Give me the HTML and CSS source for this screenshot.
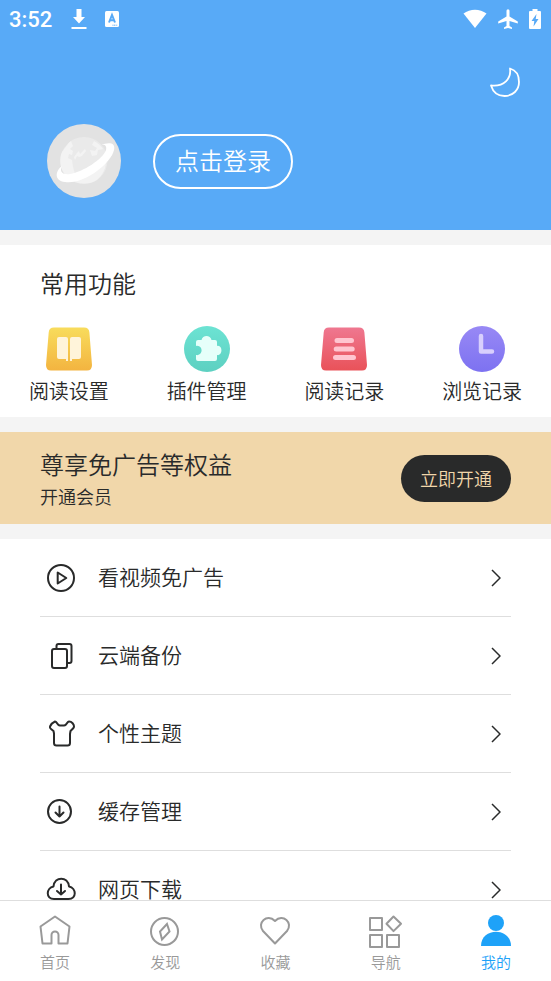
FILE: index.html
```html
<!DOCTYPE html>
<html lang="zh-CN">
<head>
<meta charset="utf-8">
<meta name="viewport" content="width=device-width, initial-scale=1">
<title>我的</title>
<link rel="stylesheet" href="styles.css">
</head>
<body>
<div class="content">
  <header class="profile">
    <div class="status">
      <span class="time">3:52</span>
      <svg class="s-download" width="16" height="22" viewBox="0 0 16 22" fill="#fff"><path d="M5.500 1h5v8H14L8 15.500 2 9h3.500zM.5 19h15v2H.5z"/></svg>
      <svg class="s-app" width="16" height="16" viewBox="0 0 16 16"><rect x="1" width="14" height="16" rx="1.500" fill="#fff"/><path d="M5 11.500 8 4l3 7.500M6 9.200h4" fill="none" stroke="#58aaf7" stroke-width="2"/><path d="M8.500 14.200h5" stroke="#58aaf7" stroke-dasharray="1 .6"/></svg>
      <span class="spacer"></span>
      <svg width="24" height="20" viewBox="0 0 24 20" fill="#fff"><path d="M.5 4.500C7-.6 17-.6 23.500 4.500L12 19z"/></svg>
      <svg width="20" height="20" viewBox="0 0 20 20" fill="#fff"><path d="M8.500 1.800a1.500 1.500 0 0 1 3 0v5.700l8.300 5v2l-8.300-2.600v5l2.500 1.600V20l-4-1-4 1v-1.500l2.500-1.600v-5L.2 14.500v-2l8.300-5z"/></svg>
      <svg width="12" height="20" viewBox="0 0 12 20"><path fill="#fff" d="M3.500 0h5v2H11q1 0 1 1v16q0 1-1 1H1q-1 0-1-1V3q0-1 1-1h2.500z"/><path fill="#58aaf7" d="M7.500 5 2.500 12h2.800L4.500 17.500 9.500 10H6.700z"/></svg>
    </div>
    <div class="tools">
      <button class="theme" aria-label="夜间模式"><svg width="32" height="32" viewBox="0 0 32 32" fill="none" stroke="#fff" stroke-width="1.800" stroke-linejoin="round"><path d="M21 2.500C22.500 12.500 15 21 2 19.500 4 26 9 30 15.500 30 24 30 30 24 30 16 30 9 26.500 4 21 2.500Z"/></svg></button>
    </div>
    <div class="account">
      <svg class="avatar" width="74" height="74" viewBox="0 0 74 74"><circle cx="37" cy="37" r="37" fill="#e2e2e2"/><circle cx="37" cy="36.500" r="23.500" fill="#eaeaea"/><path fill="#f3f3f3" d="M22 18.500 24 17l2 5-3 3 3 2-1 4-3-1-1 4 4 2 1 7 2 7-4 5C14 51 11 37 15 28zM27 33l3-4 2-2 1 3 5-5 1 2-4 5-3 1-2-1-2 4zM43 26l5 1 2-3-5-3 2-4q6 3 9 8l-5 1-1 5-5 1z"/><path fill="#f3f3f3" d="M59 39Q58 49 50 56q-10 6-22 2l6-4 13-8 4-5z"/><path fill="#fff" d="M54 21C61 18 69 18 67 26 64 40 36 61 18 58 7 57 8 47 15 42 12 48 16 51 23 50 36 48 56 35 59 26 60 22 58 20 54 21Z"/></svg>
      <button class="login">点击登录</button>
    </div>
  </header>

  <section class="card">
    <h2>常用功能</h2>
    <div class="features">
      <a href="#"><svg width="46" height="46" viewBox="0 0 46 46"><defs><linearGradient id="gy" x2="0" y2="1"><stop stop-color="#f8dc5c"/><stop offset="1" stop-color="#f3b440"/></linearGradient></defs><path fill="url(#gy)" d="M8 1.500h30q5 0 5.400 5L46 39q0 5.500-5 5.500H5q-5 0-5-5.500L2.700 6.500Q3 1.500 8 1.500z"/><path fill="#fff4da" d="M13 11h7q2 0 2 2v22h-2v-2h-7q-2 0-2-2V13q0-2 2-2zM26 11h7q2 0 2 2v18q0 2-2 2h-7v2h-2V13q0-2 2-2z"/></svg>阅读设置</a>
      <a href="#"><svg width="46" height="46" viewBox="0 0 46 46"><defs><linearGradient id="gg" x2="0" y2="1"><stop stop-color="#6ce3d3"/><stop offset="1" stop-color="#5dd0c1"/></linearGradient></defs><circle cx="23" cy="23" r="23" fill="url(#gg)"/><path fill="#e6fffa" d="M14 14H17.500C18.500 8.700 26.500 8.700 27.500 14H31Q33 14 33 16V20C39 18.500 39 30.500 33 29V33Q33 35 31 35H14Q12 35 12 33V29C19.500 30.500 19.500 18.500 12 20V16Q12 14 14 14Z"/></svg>插件管理</a>
      <a href="#"><svg width="46" height="46" viewBox="0 0 46 46"><defs><linearGradient id="gr" x2="0" y2="1"><stop stop-color="#ef7790"/><stop offset="1" stop-color="#e95259"/></linearGradient></defs><path fill="url(#gr)" d="M8 1.500h30q5 0 5.400 5L46 39q0 5.500-5 5.500H5q-5 0-5-5.500L2.700 6.500Q3 1.500 8 1.500z"/><path stroke="#ffc5d0" stroke-width="5" stroke-linecap="round" d="M16 14.500h14.500M15.200 23h16M14.500 31.500h18"/></svg>阅读记录</a>
      <a href="#"><svg width="46" height="46" viewBox="0 0 46 46"><defs><linearGradient id="gp" x2="0" y2="1"><stop stop-color="#9889f5"/><stop offset="1" stop-color="#7d72f1"/></linearGradient></defs><circle cx="23" cy="23" r="23" fill="url(#gp)"/><path fill="none" stroke="#d8cffd" stroke-width="4.500" stroke-linecap="round" stroke-linejoin="round" d="M22 10v15.500h11"/></svg>浏览记录</a>
    </div>
  </section>

  <section class="vip">
    <div>
      <h2>尊享免广告等权益</h2>
      <p>开通会员</p>
    </div>
    <button>立即开通</button>
  </section>

  <ul class="menu">
    <li><a href="#"><svg class="icon" viewBox="0 0 30 30"><circle cx="15" cy="15" r="13"/><path d="M11.700 9.500v11l8.600-5.500z"/></svg><span>看视频免广告</span><svg class="arrow" viewBox="0 0 10 18"><path d="m1 1 8 8-8 8"/></svg></a></li>
    <li><a href="#"><svg class="icon" viewBox="0 0 30 30"><rect x="6" y="8" width="15" height="19" rx="2"/><path d="M10.500 7.500V5q0-2 2-2h11q2 0 2 2v15q0 2-2 2H21.500"/></svg><span>云端备份</span><svg class="arrow" viewBox="0 0 10 18"><path d="m1 1 8 8-8 8"/></svg></a></li>
    <li><a href="#"><svg class="icon" viewBox="0 0 30 30"><path d="M9 2.500C10 2.500 11 4 12 5.500q1 1 2 1h4q1 0 2-1c1-1.500 2-3 3-3 3 0 5 3 5 5q0 1-1 2l-2.500 2.500L24 15v9q0 2.500-2.500 2.500h-11Q8 26.500 8 24V14.500L7.500 12 5 10Q3.500 9 4 7.500 5.500 4 9 2.500Z"/></svg><span>个性主题</span><svg class="arrow" viewBox="0 0 10 18"><path d="m1 1 8 8-8 8"/></svg></a></li>
    <li><a href="#"><svg class="icon" viewBox="0 0 30 30"><circle cx="13.500" cy="14.500" r="11.500"/><path stroke-linecap="round" d="M13.500 9.500v10M9.500 15.500l4 4 4-4"/></svg><span>缓存管理</span><svg class="arrow" viewBox="0 0 10 18"><path d="m1 1 8 8-8 8"/></svg></a></li>
    <li><a href="#"><svg class="icon" viewBox="0 0 30 30"><path d="M8 24C-.5 24 0 13 7.500 11.500 8.500 1 22 1 23 11.500 30.500 13 31 24 22.500 24Z"/><path stroke-linecap="round" d="M15 9.500v10M11 16l4 3.500 4-3.500"/></svg><span>网页下载</span><svg class="arrow" viewBox="0 0 10 18"><path d="m1 1 8 8-8 8"/></svg></a></li>
  </ul>
</div>

<nav class="tabs">
  <a href="#"><svg viewBox="0 0 34 34"><path d="M17 2.500 31.500 12.500l-2 17H20.500v-8.500a3.500 3.500 0 0 0-7 0v8.500H4.500l-2-17Z"/></svg>首页</a>
  <a href="#"><svg viewBox="0 0 34 34"><circle cx="16.500" cy="17.500" r="13.500"/><path stroke-linejoin="miter" d="M19 10 21.500 17.500 14 25.500 12 17.500Z"/></svg>发现</a>
  <a href="#"><svg viewBox="0 0 34 34"><path d="M17 29.500 5 17C-1.500 9 9-1 17 7 25-1 35.500 9 29 17Z"/></svg>收藏</a>
  <a href="#"><svg viewBox="0 0 34 34"><path d="M1 4h12v12H1zM1 21h12v12H1zM18 21h12v12H18zM24.500 2.500 32 9.800l-7.500 7.300L17.500 9.800Z"/></svg>导航</a>
  <a href="#" class="active" aria-current="page"><svg viewBox="0 0 34 34"><circle cx="17" cy="9" r="8"/><path d="M2 32C2 13 32 13 32 32Z"/></svg>我的</a>
</nav>
</body>
</html>
```
FILE: styles.css
```css
* { box-sizing: border-box; }

body {
  margin: 0;
  height: 100vh;
  display: flex;
  flex-direction: column;
  background: #fff;
  color: #292a2a;
  font-family: "Noto Sans CJK SC", "Noto Sans", sans-serif;
  font-weight: 350;
}

h2, p, ul { margin: 0; padding: 0; font-weight: inherit; }
a { color: inherit; text-decoration: none; }
button { font: inherit; cursor: pointer; }
svg { display: block; flex: none; }

.content {
  flex: 1;
  min-height: 0;
  overflow: hidden;
  background: #f4f4f4;
}

.profile {
  background: #58aaf7;
  color: #fff;
  padding-bottom: 32px;
}

.status {
  display: flex;
  align-items: center;
  gap: 11px;
  height: 37px;
  padding: 0 10px 0 9px;
}
.time { font: 500 22px/22px Roboto, sans-serif; padding-top: 2px; }
.s-download { margin-left: 8px; }
.s-app { margin-left: 6px; }
.spacer { flex: 1; }

.tools {
  display: flex;
  justify-content: flex-end;
  padding: 29px 30px 0 0;
}
.theme {
  border: 0;
  padding: 0;
  background: none;
}

.account {
  display: flex;
  align-items: center;
  gap: 32px;
  padding: 26px 47px 0;
}
.login {
  height: 55px;
  padding: 0 20px 2px;
  border: 2px solid #fff;
  border-radius: 28px;
  background: none;
  color: #fff;
  font-size: 24px;
  line-height: 36px;
}

.card {
  margin: 15px 0;
  padding: 20px 0 11px;
  background: #fff;
}
.card h2 {
  padding: 0 40px;
  font-size: 24px;
  line-height: 36px;
}
.features {
  display: grid;
  grid-template-columns: repeat(4, 1fr);
  margin-top: 25px;
}
.features a {
  display: flex;
  flex-direction: column;
  align-items: center;
  gap: 4px;
  font-size: 20px;
  line-height: 30px;
}

.vip {
  display: flex;
  align-items: center;
  justify-content: space-between;
  padding: 14px 40px;
  background: #f1d7aa;
}
.vip h2 { font-size: 24px; line-height: 36px; }
.vip p { font-size: 18px; line-height: 28px; }
.vip button {
  height: 47px;
  padding: 0 19px;
  border: 0;
  border-radius: 24px;
  background: #292a2a;
  color: #f1d7aa;
  font-size: 18px;
}

.menu {
  margin-top: 15px;
  padding: 0 40px;
  background: #fff;
  list-style: none;
}
.menu a {
  display: flex;
  align-items: center;
  gap: 22px;
  height: 78px;
  padding: 0 10px 0 6px;
  border-bottom: 1px solid #dedede;
  font-size: 21px;
  line-height: 32px;
}
.menu span { flex: 1; padding-bottom: 4px; }
.icon, .arrow {
  fill: none;
  stroke: #292a2a;
  stroke-linejoin: round;
}
.icon { width: 30px; height: 30px; stroke-width: 2; }
.arrow { width: 10px; height: 18px; stroke-width: 1.5; }

.tabs {
  display: grid;
  grid-template-columns: repeat(5, 1fr);
  padding: 13px 0 9px;
  border-top: 1px solid #dedede;
  background: #fff;
}
.tabs a {
  display: flex;
  flex-direction: column;
  align-items: center;
  gap: 3px;
  color: #999;
  font-size: 15px;
  line-height: 21px;
}
.tabs svg {
  width: 34px;
  height: 34px;
  fill: none;
  stroke: currentColor;
  stroke-width: 2;
  stroke-linejoin: round;
}
.tabs .active { color: #1ea2f8; }
.tabs .active svg { fill: currentColor; stroke: none; }
```
